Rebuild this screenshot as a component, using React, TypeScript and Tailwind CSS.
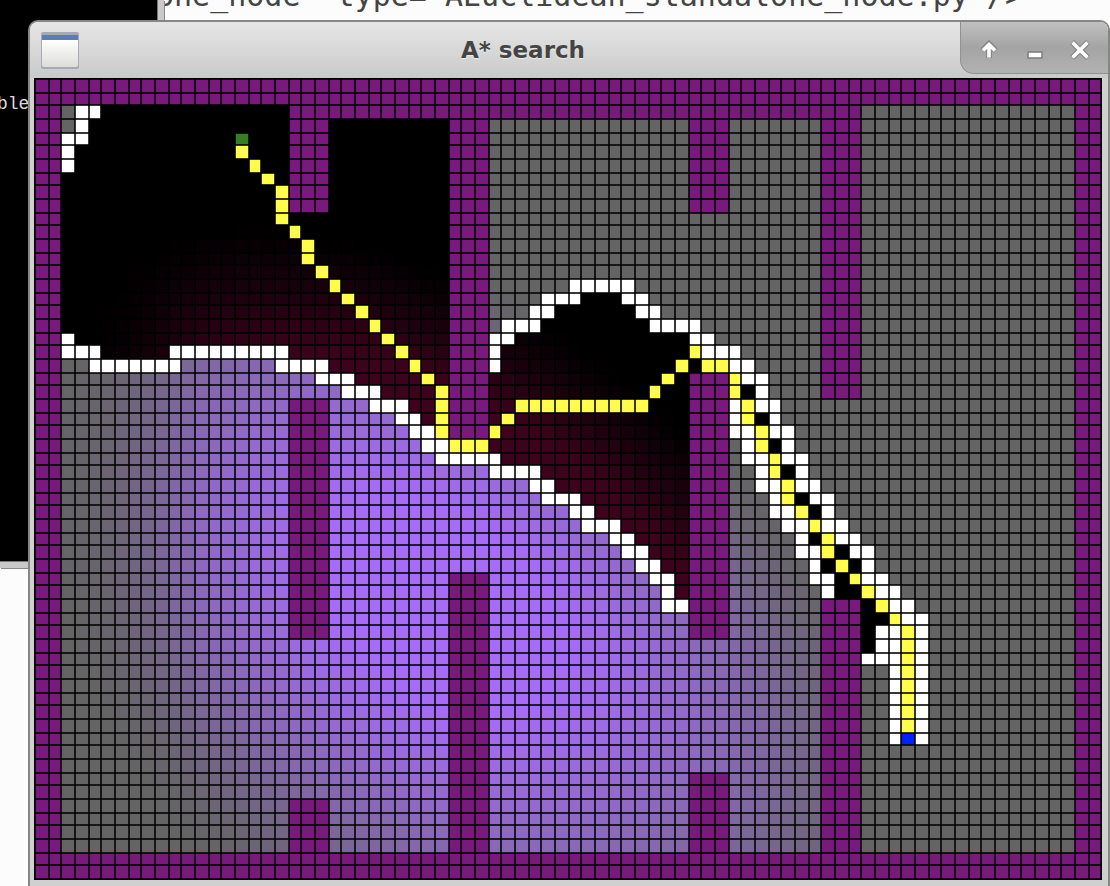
type Span = [row: number, from: number, to?: number];

const COLS = 80;
const ROWS = 60;

const edge = (i: number) => 1 + 40 * Math.floor(i / 3) + [0, 14, 26][i % 3];

// [firstCol, lastCol, firstRow, lastRow]
const WALLS = [
  [0, 79, 0, 1], [0, 79, 58, 59], [0, 1, 0, 59], [78, 79, 0, 59], [19, 61, 2, 2],
  [19, 21, 2, 9], [19, 21, 24, 41], [19, 21, 54, 59],
  [31, 33, 2, 26], [31, 33, 37, 59],
  [49, 51, 2, 9], [49, 51, 22, 41], [49, 51, 52, 59],
  [59, 61, 2, 23], [59, 61, 39, 59],
];

const LOWER: Span[] = [
  [19, 2], [20, 2, 4], [20, 10, 18], [21, 4, 10], [21, 18, 21], [22, 21, 23], [23, 23, 25],
  [24, 25, 27], [25, 27, 28], [26, 28, 29], [27, 29, 30], [28, 30, 34], [29, 34, 37],
  [30, 37, 38], [31, 38, 40], [32, 40, 41], [33, 41, 43], [34, 43, 44], [35, 44, 45],
  [36, 45, 46], [37, 46, 47], [38, 47], [39, 47, 48],
];

const UPPER: Span[] = [
  [15, 40, 44], [16, 38, 40], [16, 44, 45], [17, 37, 38], [17, 45, 46], [18, 35, 37],
  [18, 46, 49], [19, 34, 35], [20, 34], [21, 34],
];

const BAND: Span[] = [
  [2, 3, 4], [3, 3], [4, 2, 3], [5, 2], [6, 2],
  [19, 49, 50], [20, 50, 52], [21, 52, 53], [22, 53, 54], [23, 54], [24, 52], [24, 54, 55],
  [25, 52], [25, 55], [26, 52, 53], [26, 55, 56], [27, 53], [27, 56], [28, 53, 54],
  [28, 56, 57], [29, 54], [29, 57], [30, 54, 55], [30, 57, 58], [31, 55], [31, 58, 59],
  [32, 55, 56], [32, 59], [33, 56, 57], [33, 59, 60], [34, 57], [34, 60, 61], [35, 57, 58],
  [35, 61, 62], [36, 58], [36, 62], [37, 58, 59], [37, 62, 63], [38, 59], [38, 63, 64],
  [39, 64, 65], [40, 65, 66], [41, 63, 64], [41, 66], [42, 63, 64], [42, 66],
  [43, 62, 64], [43, 66], [44, 64], [44, 66], [45, 64], [45, 66], [46, 64], [46, 66],
  [47, 64], [47, 66], [48, 64], [48, 66], [49, 64], [49, 66],
];

const CLOSED: Span[] = [
  [21, 49], [23, 53], [25, 54], [27, 55], [29, 56], [31, 57], [32, 58], [34, 58], [35, 60],
  [36, 59], [36, 61], [37, 60], [38, 60, 61], [39, 62], [40, 62, 63], [41, 62], [42, 62],
];

const PATH: Span[] = [
  [5, 15], [6, 16], [7, 17], [8, 18], [9, 18], [10, 18], [11, 19], [12, 20], [13, 20],
  [14, 21], [15, 22], [16, 23], [17, 24], [18, 25], [19, 26], [20, 27], [21, 28], [22, 29],
  [23, 30], [24, 30], [25, 30], [26, 30], [27, 31, 33], [26, 34], [25, 35], [24, 36, 45],
  [23, 46], [22, 47], [21, 48], [20, 49], [21, 50, 51], [22, 52], [23, 52], [24, 53],
  [25, 53], [26, 54], [27, 54], [28, 55], [29, 55], [30, 56], [31, 56], [32, 57], [33, 58],
  [34, 59], [35, 59], [36, 60], [37, 61], [38, 62], [39, 63], [40, 64], [41, 65], [42, 65],
  [43, 65], [44, 65], [45, 65], [46, 65], [47, 65], [48, 65],
];

// Strength of the cost field at a cell, 0 to 1.
function field(c: number, r: number) {
  if (c >= 59) return 0;
  let dx = edge(c) - 404;
  const dy = edge(r) - 516;
  if (dx > 0) dx *= 0.9;
  const u = 0.75 * dx + 0.66 * dy;
  const v = -0.66 * dx + 0.75 * dy;
  const rest = Math.max(0, 1 - (u / 490) ** 2 - (v / (v > 0 ? 345 : 285)) ** 2);
  const ramp = Math.min(1, (edge(c) - 10) / 150);
  return Math.min(1, 1.12 * ramp * rest ** 1.5);
}

function buildCells() {
  const grid: string[][] = [];
  const lower = (c: number) =>
    Math.max(...LOWER.filter(([, a, b = a]) => c >= a && c <= b).map(([r]) => r));
  const upper = (c: number) =>
    Math.min(...UPPER.filter(([, a, b = a]) => c >= a && c <= b).map(([r]) => r), 99);
  for (let r = 0; r < ROWS; r++) {
    grid.push([]);
    for (let c = 0; c < COLS; c++) {
      const f = field(c, r);
      const dark = c <= 48 && r <= lower(c) && (c < 34 || r >= upper(c)) && !(c === 2 && r < 4);
      const k = Math.max(0, Math.min(1, (f - 0.02) / 0.5));
      grid[r].push(
        dark
          ? `rgb(${Math.round(60 * k)},${Math.round(3 * k)},${Math.round(28 * k)})`
          : `rgb(${Math.round(100 + 65 * f)},${Math.round(100 + 8 * f)},${Math.round(100 + 145 * f)})`,
      );
    }
  }
  for (const [c0, c1, r0, r1] of WALLS)
    for (let r = r0; r <= r1; r++) for (let c = c0; c <= c1; c++) grid[r][c] = "#771a7b";
  const paint = (spans: Span[], color: string) => {
    for (const [r, a, b = a] of spans) for (let c = a; c <= b; c++) grid[r][c] = color;
  };
  paint(LOWER, "#ffffff");
  paint(UPPER, "#ffffff");
  paint(BAND, "#ffffff");
  paint(CLOSED, "#000000");
  paint(PATH, "#fffb4f");
  grid[4][15] = "#377e22";
  grid[49][65] = "#0023f5";
  return grid;
}

const CELLS = buildCells();

function SearchGrid() {
  return (
    <svg viewBox="0 0 1068 802" className="block w-full bg-black" role="img" aria-label="Search grid" shapeRendering="crispEdges">
      {CELLS.map((row, r) =>
        row.map((color, c) => (
          <rect key={`${r}-${c}`} x={edge(c)} y={edge(r)} width={edge(c + 1) - edge(c)} height={edge(r + 1) - edge(r)} fill={color} />
        )),
      )}
      {Array.from({ length: COLS + 1 }, (_, c) => (
        <rect key={`v${c}`} x={edge(c) - 1} y={0} width={2} height={802} fill="#000" opacity={0.78} />
      ))}
      {Array.from({ length: ROWS + 1 }, (_, r) => (
        <rect key={`h${r}`} x={0} y={edge(r) - 1} width={1068} height={2} fill="#000" opacity={0.78} />
      ))}
    </svg>
  );
}

function AppIcon() {
  return (
    <svg viewBox="0 0 40 38" className="h-[38px] w-10">
      <defs>
        <linearGradient id="sheet" x1="0" y1="0" x2="0" y2="1">
          <stop offset="0" stopColor="#ffffff" />
          <stop offset="1" stopColor="#dcdcd8" />
        </linearGradient>
      </defs>
      <rect x="1" y="0" width="38" height="37" rx="2" fill="#a6abb3" />
      <rect x="2" y="3" width="36" height="5" fill="#5d7cb3" />
      <path d="M2 8H38V33Q38 35 36 35H4Q2 35 2 33Z" fill="url(#sheet)" />
    </svg>
  );
}

export default function App() {
  return (
    <main className="relative min-h-screen overflow-hidden bg-[#fcfcfc]">
      <pre className="absolute -top-[19px] left-[156px] font-['DejaVu_Sans_Mono',monospace] text-[30px] leading-[30px] text-[#444]">
        {'one_node" type="AEuclidean_standalone_node.py"/>'}
      </pre>

      <section className="absolute top-0 left-0 h-[568px] w-[164px] border-r-[6px] border-b-[6px] border-[#c9c9c9] bg-black shadow-[inset_-1px_-1px_0_#777,1px_1px_0_#888]">
        <p className="mt-[94px] -ml-[3px] font-['Liberation_Mono',monospace] text-[18px] leading-5 text-[#dcdcdc]">ble</p>
      </section>

      <section className="absolute top-5 right-0 left-[28px] rounded-t-[10px] border-t-2 border-r-2 border-l-2 border-[#858785] bg-[#d0d0d0] pb-2">
        <header className="flex h-14 items-start rounded-t-lg bg-linear-to-b from-[#e6e6e6] to-[#cacaca] pl-2.5">
          <div className="pt-2.5">
            <AppIcon />
          </div>
          <h1 className="flex-1 pt-3 pl-1.5 text-center font-['DejaVu_Sans',sans-serif] text-[23px] leading-8 font-bold text-[#444] [text-shadow:0_1px_1px_#eee]">
            A* search
          </h1>
          <div className="flex h-[52px] w-[148px] items-center justify-between rounded-tr-lg rounded-bl-[14px] border-b border-l border-[#919191] bg-linear-to-b from-[#c0c0c0] via-[#a4a4a4] to-[#b2b2b2] px-4 pt-1">
            <button type="button" aria-label="Maximize" className="flex size-6 items-center justify-center">
              <svg viewBox="0 0 24 24" className="size-6" fill="none">
                <path d="M12 6V20M5.5 12.5L12 6L18.5 12.5" stroke="#868686" strokeWidth="6" />
                <path d="M12 6V19.5M6 12.5L12 6.5L18 12.5" stroke="#fff" strokeWidth="3.6" />
                <path d="M12 5L17 11H7Z" fill="#fff" />
              </svg>
            </button>
            <button type="button" aria-label="Minimize" className="flex size-6 items-center justify-center">
              <svg viewBox="0 0 24 24" className="size-6">
                <rect x="5" y="14" width="14" height="6" fill="#fff" stroke="#808080" strokeWidth="1.6" />
              </svg>
            </button>
            <button type="button" aria-label="Close" className="flex size-6 items-center justify-center">
              <svg viewBox="0 0 24 24" className="size-6">
                <path d="M4 4L20 20M20 4L4 20" stroke="#868686" strokeWidth="6" />
                <path d="M4.5 4.5L19.5 19.5M19.5 4.5L4.5 19.5" stroke="#fff" strokeWidth="3.6" />
              </svg>
            </button>
          </div>
        </header>
        <div className="pr-1.5 pl-1">
          <SearchGrid />
        </div>
      </section>
    </main>
  );
}
